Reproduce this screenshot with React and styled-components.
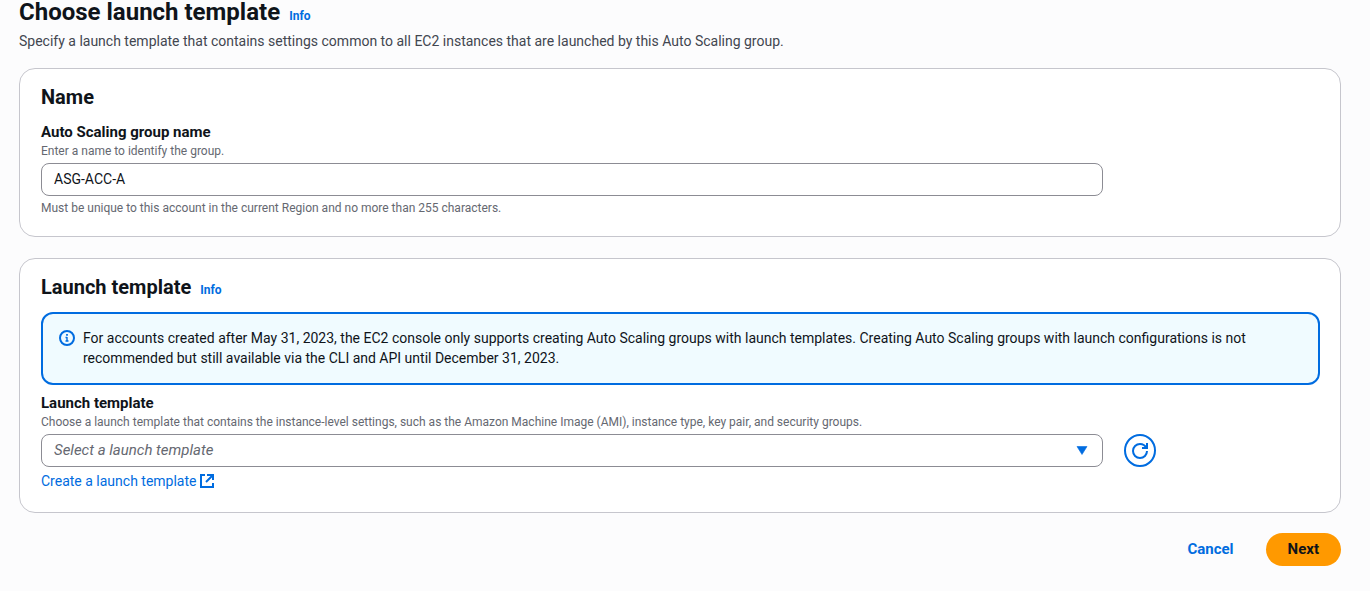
import React from "react";
import styled, { createGlobalStyle } from "styled-components";

const GlobalStyle = createGlobalStyle`
  *, *::before, *::after { box-sizing: border-box; }
  body {
    margin: 0;
    background: #fcfcfd;
    color: #0f141a;
    font-family: Roboto, "Open Sans", sans-serif;
    font-size: 14px;
    line-height: 20px;
  }
  h1, h2, p { margin: 0; }
  input, select, button { font: inherit; color: inherit; }
`;

const Page = styled.form`
  padding: 0 29px 25px 19px;
`;

const PageHeader = styled.header`
  display: flex;
  flex-direction: column;
  gap: 7px;
  margin-bottom: 17px;
`;

const TitleRow = styled.div`
  display: flex;
  align-items: baseline;
  gap: 9px;
`;

const PageTitle = styled.h1`
  font-size: 24px;
  line-height: 24px;
  font-weight: 700;
`;

const Description = styled.p`
  color: #424650;
`;

const InfoLink = styled.a`
  color: #006ce0;
  font-size: 12px;
  line-height: 16px;
  font-weight: 700;
  text-decoration: none;
`;

const Card = styled.section`
  padding: 16px 20px 20px 21px;
  background: #fff;
  border: 1px solid #c6c6cd;
  border-radius: 16px;

  & + & { margin-top: 21px; padding-bottom: 21px; }
`;

const CardTitle = styled.h2`
  font-size: 20px;
  line-height: 24px;
  font-weight: 700;
`;

const Alert = styled.div`
  display: flex;
  gap: 8px;
  margin: 13px 0 8px;
  padding: 14px 16px 15px;
  background: #f0fbff;
  border: 2px solid #006ce0;
  border-radius: 12px;

  svg { flex: none; margin-top: 2px; }
`;

const Field = styled.div`
  display: flex;
  flex-direction: column;
  margin-top: ${(p) => p.$spacing || "0"};
`;

const Label = styled.label`
  font-size: 15px;
  font-weight: 700;
`;

const Hint = styled.p`
  margin: 1px 0 4px;
  color: #656871;
  font-size: 12px;
  line-height: 16px;
`;

const Constraint = styled(Hint)`
  margin: 4px 0 0;
`;

const ControlGrid = styled.div`
  display: grid;
  grid-template-columns: repeat(12, minmax(0, 1fr));
  column-gap: 21px;
`;

const ControlCell = styled.div`
  grid-column: span 10;
  display: flex;
  position: relative;

  svg {
    position: absolute;
    right: 15px;
    top: 11px;
    pointer-events: none;
  }
`;

const TextInput = styled.input`
  width: 100%;
  height: 33px;
  padding: 0 12px 1px;
  background: #fff;
  border: 1px solid #8c8c94;
  border-radius: 8px;
`;

const Select = styled.select`
  width: 100%;
  height: 33px;
  padding: 0 40px 1px 12px;
  appearance: none;
  background: #fff;
  border: 1px solid #8c8c94;
  border-radius: 8px;
  color: #656871;
  font-size: 15px;
  font-style: italic;
`;

const RefreshButton = styled.button`
  display: grid;
  place-items: center;
  width: 32px;
  height: 33px;
  padding: 0;
  background: #fff;
  border: 2px solid #006ce0;
  border-radius: 50%;
  color: #006ce0;
`;

const ExternalLink = styled.a`
  display: inline-flex;
  align-items: center;
  align-self: flex-start;
  gap: 3px;
  margin-top: 4px;
  color: #006ce0;
  text-decoration: none;
`;

const Actions = styled.footer`
  display: flex;
  justify-content: flex-end;
  gap: 10px;
  margin-top: 20px;
`;

const ActionButton = styled.button`
  height: 33px;
  padding: 0 22px 1px;
  border: 0;
  border-radius: 20px;
  font-size: 15px;
  font-weight: 700;
  background: ${(p) => (p.$primary ? "#ff9900" : "transparent")};
  color: ${(p) => (p.$primary ? "#0f141a" : "#006ce0")};
`;

const InfoIcon = () => (
  <svg width="16" height="16" viewBox="0 0 16 16" fill="none" stroke="#006ce0" strokeWidth="2" aria-hidden="true">
    <circle cx="8" cy="8" r="7" />
    <path d="M8 11V7M6.5 7.5H8M6.5 11h3" strokeWidth="1.4" />
    <path d="M8 4v1.8" strokeWidth="1.8" />
  </svg>
);

const CaretIcon = () => (
  <svg width="12" height="12" viewBox="0 0 12 12" aria-hidden="true">
    <path d="M1 1.5h10L6 9.5z" fill="#006ce0" stroke="#006ce0" strokeWidth="0.6" strokeLinejoin="round" />
  </svg>
);

const RefreshIcon = () => (
  <svg width="16" height="16" viewBox="0 0 16 16" fill="none" stroke="currentColor" strokeWidth="2" aria-hidden="true">
    <path d="M15 8c0 3.87-3.13 7-7 7s-7-3.13-7-7 3.13-7 7-7c2.79 0 5.2 1.63 6.33 4" />
    <path d="M15 0v5h-5" />
  </svg>
);

const ExternalIcon = () => (
  <svg width="16" height="16" viewBox="0 0 16 16" fill="none" stroke="currentColor" strokeWidth="2" aria-hidden="true">
    <path d="M6 2H2v12h12v-4" />
    <path d="M8 2h6v5M14 2L7 9" />
  </svg>
);

export default function App() {
  return (
    <>
      <GlobalStyle />
      <Page onSubmit={(e) => e.preventDefault()}>
        <PageHeader>
          <TitleRow>
            <PageTitle>Choose launch template</PageTitle>
            <InfoLink href="#template-info">Info</InfoLink>
          </TitleRow>
          <Description>
            Specify a launch template that contains settings common to all EC2 instances that are launched by this Auto Scaling group.
          </Description>
        </PageHeader>

        <Card>
          <CardTitle>Name</CardTitle>
          <Field $spacing="13px">
            <Label htmlFor="group-name">Auto Scaling group name</Label>
            <Hint>Enter a name to identify the group.</Hint>
            <ControlGrid>
              <ControlCell>
                <TextInput id="group-name" type="text" defaultValue="ASG-ACC-A" />
              </ControlCell>
            </ControlGrid>
            <Constraint>
              Must be unique to this account in the current Region and no more than 255 characters.
            </Constraint>
          </Field>
        </Card>

        <Card>
          <TitleRow>
            <CardTitle>Launch template</CardTitle>
            <InfoLink href="#launch-info">Info</InfoLink>
          </TitleRow>
          <Alert>
            <InfoIcon />
            <p>
              For accounts created after May 31, 2023, the EC2 console only supports creating Auto Scaling groups with launch templates. Creating Auto Scaling groups with launch configurations is not recommended but still available via the CLI and API until December 31, 2023.
            </p>
          </Alert>
          <Field>
            <Label htmlFor="launch-template">Launch template</Label>
            <Hint>
              Choose a launch template that contains the instance-level settings, such as the Amazon Machine Image (AMI), instance type, key pair, and security groups.
            </Hint>
            <ControlGrid>
              <ControlCell>
                <Select id="launch-template" defaultValue="">
                  <option value="">Select a launch template</option>
                </Select>
                <CaretIcon />
              </ControlCell>
              <RefreshButton type="button" aria-label="Refresh launch templates">
                <RefreshIcon />
              </RefreshButton>
            </ControlGrid>
            <ExternalLink href="#create">
              Create a launch template
              <ExternalIcon />
            </ExternalLink>
          </Field>
        </Card>

        <Actions>
          <ActionButton type="button">Cancel</ActionButton>
          <ActionButton type="submit" $primary>Next</ActionButton>
        </Actions>
      </Page>
    </>
  );
}
